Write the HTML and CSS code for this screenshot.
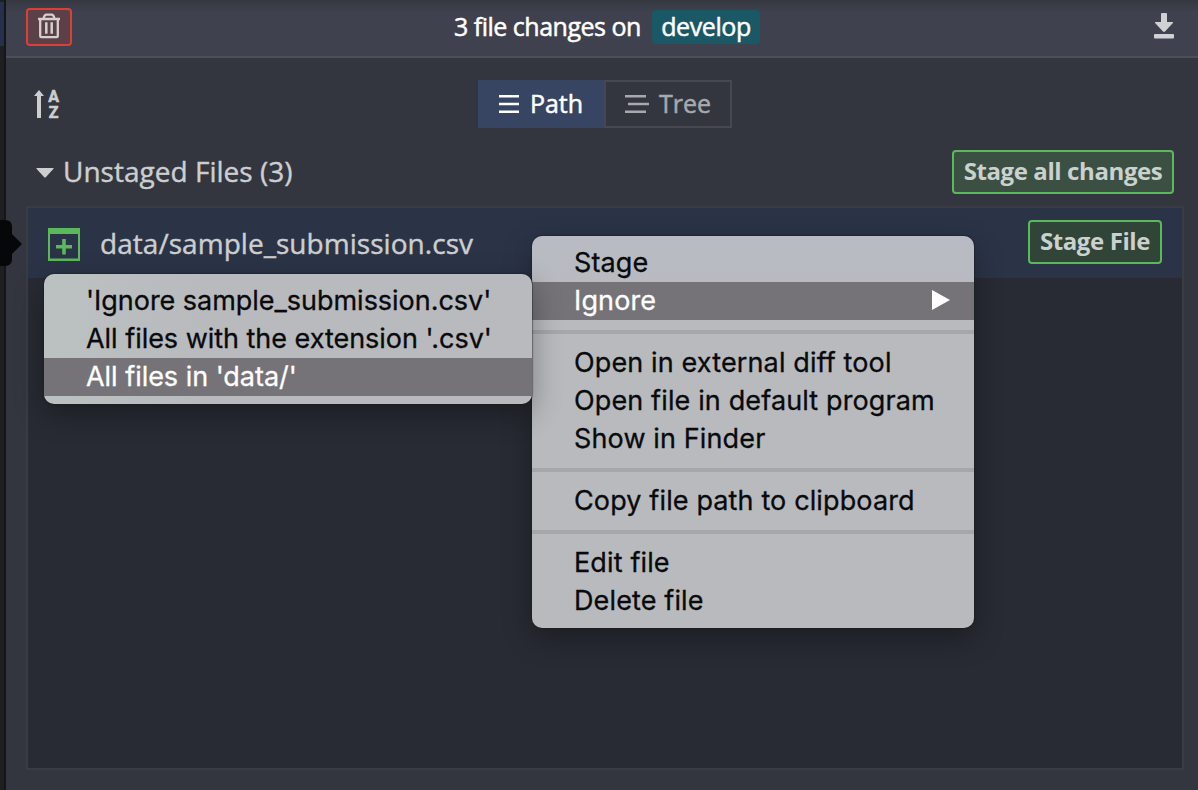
FILE: index.html
```html
<!DOCTYPE html>
<html lang="en">
<head>
<meta charset="utf-8">
<title>File changes</title>
<link rel="stylesheet" href="styles.css">
</head>
<body>
<div class="app">
  <aside class="edge"><div class="edge-selected"></div></aside>
  <main class="panel">
    <header class="header">
      <button class="discard" aria-label="Discard all">
        <svg width="24" height="26" viewBox="0 0 24 26" fill="none" stroke="currentColor" stroke-width="2.300">
          <path d="M1 6h22M3.200 6v17q0 1.200 1.200 1.200h15.200q1.200 0 1.200-1.200V6M6.500 6C7 3 8 1.700 9.500 1.700h5C16 1.700 17 3 17.500 6"/>
          <path d="M9.300 9.200v11.600M14.700 9.200v11.600" stroke-width="2.500"/>
        </svg>
      </button>
      <div class="summary"><span class="summary-text">3 file changes on</span><span class="branch">develop</span></div>
      <svg class="download" width="20" height="26" viewBox="0 0 20 26" fill="currentColor"><path d="M7 1q0-1 1-1h4q1 0 1 1v8h5.500q1 0 .400.900L11 18.600q-1 .900-2 0L1.100 9.900Q.5 9 1.500 9H7z"/><rect y="21" width="20" height="4.500" rx="1"/></svg>
    </header>
    <div class="toolbar">
      <div class="sort">
        <svg width="10" height="28" viewBox="0 0 10 28" fill="currentColor"><path d="M5 0l5 6H7v22H3V6H0z"/></svg>
        <span class="sort-letters"><span>A</span><span>Z</span></span>
      </div>
      <div class="toggle">
        <button class="tab tab-active"><svg width="20" height="18" viewBox="0 0 20 18" fill="currentColor"><path d="M0 0h20v2.600H0zM0 7.700h20v2.600H0zM0 15.400h20V18H0z"/></svg><span class="tab-label">Path</span></button>
        <button class="tab tab-tree"><svg width="24" height="18" viewBox="0 0 24 18" fill="currentColor"><path d="M0 0h21v2.600H0zM3 7.700h21v2.600H3zM0 15.400h21V18H0z"/></svg><span class="tab-label">Tree</span></button>
      </div>
    </div>
    <div class="section-head">
      <svg class="caret" width="18" height="10" viewBox="0 0 18 10" fill="currentColor"><path d="M1 0h16q1.300 0 .300 1L10 9q-1 1-2 0L.7 1Q-.3 0 1 0z"/></svg>
      <h2 class="section-title">Unstaged Files (3)</h2>
      <button class="stage stage-all"><span>Stage all changes</span></button>
    </div>
    <div class="files">
      <div class="file">
        <svg width="32" height="33" viewBox="0 0 32 33" fill="#5bb85b"><path fill-rule="evenodd" d="M0 0h32v33H0zM2 6v24.500h28V6z"/><path d="M14.200 11h3.600v6H24v3.600h-6.200v6h-3.600v-6H8V17h6.200z"/></svg>
        <span class="filename">data/sample_submission.csv</span>
        <button class="stage stage-file"><span>Stage File</span></button>
      </div>
    </div>
  </main>
</div>
<svg class="pointer" width="22" height="46" viewBox="0 0 22 46" fill="#060708"><path d="M0 0h5q7 0 7 7v7l10 10-10 10v5q0 7-7 7H0z"/></svg>
<ul class="menu context-menu">
  <li class="item"><span>Stage</span></li>
  <li class="item highlighted"><span>Ignore</span><svg class="arrow" width="18" height="20" viewBox="0 0 18 20" fill="currentColor"><path d="M0 0l18 10L0 20z"/></svg></li>
  <li class="separator"></li>
  <li class="item"><span>Open in external diff tool</span></li>
  <li class="item"><span>Open file in default program</span></li>
  <li class="item"><span>Show in Finder</span></li>
  <li class="separator"></li>
  <li class="item"><span>Copy file path to clipboard</span></li>
  <li class="separator"></li>
  <li class="item"><span>Edit file</span></li>
  <li class="item"><span>Delete file</span></li>
</ul>
<ul class="menu submenu">
  <li class="item"><span>'Ignore sample_submission.csv'</span></li>
  <li class="item"><span>All files with the extension '.csv'</span></li>
  <li class="item highlighted"><span>All files in 'data/'</span></li>
</ul>
</body>
</html>
```
FILE: styles.css
```css
* { box-sizing: border-box; }
body { margin: 0; overflow: hidden; font-family: "Open Sans", sans-serif; color: #cdced0; }
button { font: inherit; color: inherit; margin: 0; padding: 0; background: none; border: 0; }
.app { display: flex; width: 1198px; height: 790px; background: #33363f; }
.edge { width: 6px; padding-top: 2px; background: #1e1f23; border-right: 2px solid #15161a; }
.edge-selected { height: 44px; background: #25304d; }
.panel { flex: 1; display: flex; flex-direction: column; }
.header { height: 58px; display: grid; grid-template-columns: 1fr auto 1fr; align-items: start; padding: 8px 24px 0 20px; background: linear-gradient(#353741, #3f424e 12px); border-bottom: 2px solid #4c4f5a; }
.discard { width: 46px; height: 38px; display: flex; align-items: center; justify-content: center; padding-bottom: 2px; border: 2px solid #dc3f38; border-radius: 4px; background: #5b4047; color: #d5cfd1; }
.summary { display: flex; align-items: center; gap: 11px; padding: 2px 0 0 14px; font-size: 25px; letter-spacing: -0.5px; color: #fff; line-height: 32px; white-space: nowrap; -webkit-text-stroke: 0.5px currentColor; }
.summary-text { width: 187px; padding-bottom: 2px; }
.branch { width: 108px; height: 34px; text-align: center; letter-spacing: -0.4px; border-radius: 4px; background: #1a5866; }
.download { justify-self: end; margin-top: 5px; color: #d0d1d5; }
.toolbar { height: 70px; display: grid; grid-template-columns: 1fr auto 1fr; padding: 22px 28px 0; }
.sort { display: flex; gap: 5px; padding-top: 10px; color: #cdced0; }
.sort-letters { display: flex; flex-direction: column; align-items: center; width: 9px; font: 700 16px/16px "Roboto", sans-serif; -webkit-text-stroke: 0.6px currentColor; }
.sort-letters span { height: 16px; margin-top: -1px; }
.sort-letters span + span { margin-top: 0; }
.toggle { display: flex; height: 48px; margin-left: 6px; font-size: 25px; letter-spacing: -0.6px; -webkit-text-stroke: 0.5px currentColor; }
.tab { width: 126px; display: flex; align-items: center; justify-content: center; gap: 11px; }
.tab-active { background: #374563; color: #fff; }
.tab-tree { width: 128px; border: 2px solid #454850; color: #a8a9ad; gap: 10px; }
.tab-label { line-height: 34px; padding-bottom: 3px; }
.section-head { height: 78px; display: flex; align-items: flex-start; padding: 22px 24px 0 30px; }
.caret { margin-top: 18px; }
.section-title { margin: 0 auto 0 9px; font-size: 28px; font-weight: 400; letter-spacing: 0.02px; line-height: 42px; -webkit-text-stroke: 0.4px currentColor; }
.stage { height: 44px; border: 2px solid #5bb85b; border-radius: 4px; background: #3b4f43; color: #cbd1cd; font-size: 24px; font-weight: 700; letter-spacing: -0.4px; line-height: 36px; padding-bottom: 3px; white-space: nowrap; }
.stage-all { width: 222px; }
.stage-file { width: 134px; margin: -2px 0 0 auto; background: #314438; }
.files { height: 564px; margin: 0 14px 0 20px; border: 2px solid #3a3c44; background: #282b33; }
.file { height: 70px; display: flex; align-items: center; padding: 0 20px; background: #2b3447; font-size: 28px; }
.file > svg { margin-top: 3px; }
.filename { margin-left: 20px; letter-spacing: 0.04px; -webkit-text-stroke: 0.4px currentColor; }
.pointer { position: absolute; left: 0; top: 220px; }
.menu { position: absolute; margin: 0; padding: 8px 0; list-style: none; border-radius: 10px; background: #b8babe; color: #090a0c; font: 27px/38px Inter, sans-serif; -webkit-text-stroke: 0.3px currentColor; box-shadow: 0 0 1px 1px #17191d66, 0 10px 30px #0005; white-space: nowrap; }
.context-menu { left: 532px; top: 236px; width: 442px; height: 392px; letter-spacing: 0.13px; background: linear-gradient(#b8bbc4, #b8babe 70px); }
.submenu { left: 44px; top: 274px; width: 488px; height: 130px; letter-spacing: -0.03px; background: linear-gradient(90deg, #bbc1c1, #b9babe 160px); }
.item { height: 38px; display: flex; align-items: center; padding-left: 42px; }
.highlighted { background: #757378; color: #fff; }
.arrow { margin: -2px 24px 0 auto; }
.separator { height: 4px; margin: 10px 0; background: #a5a7ab; }
```
